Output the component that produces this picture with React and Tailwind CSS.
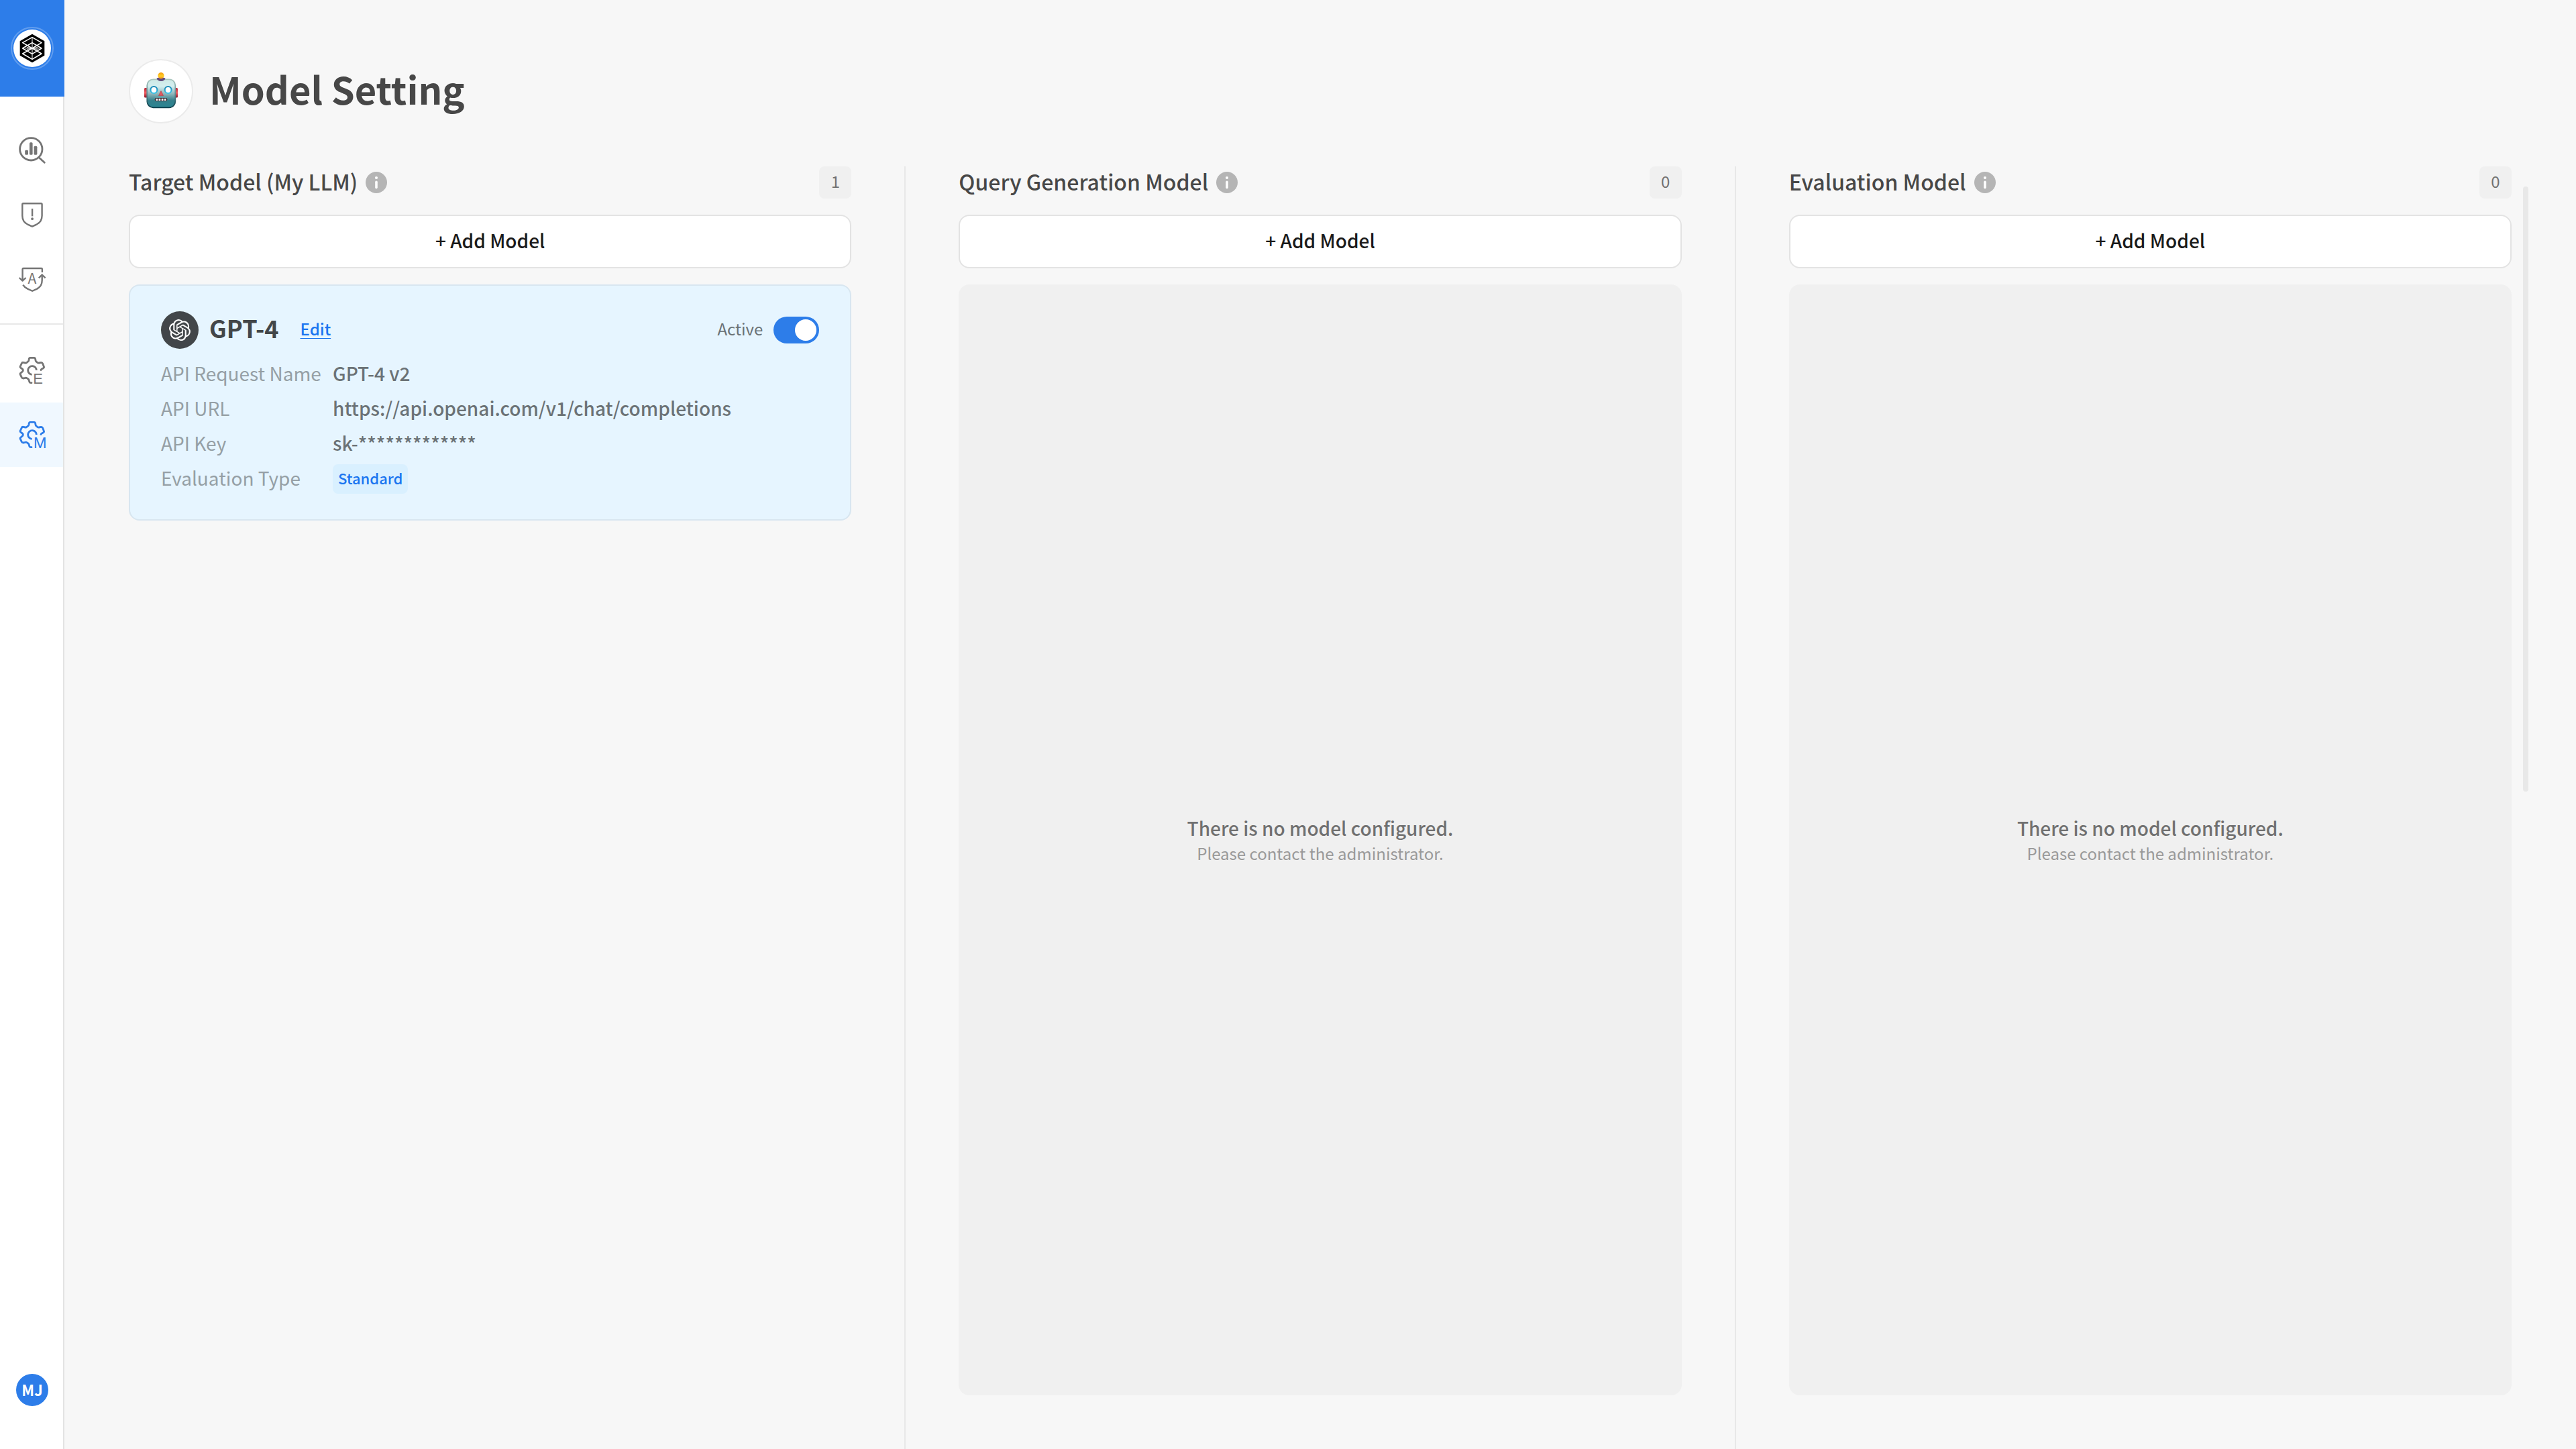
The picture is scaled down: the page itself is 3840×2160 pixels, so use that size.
import React from "react";
import { SiOpenai } from "react-icons/si";

function LogoIcon() {
  return (
    <svg viewBox="0 0 112 132" className="h-[44px] w-[38px]" aria-hidden="true">
      <path d="M56 2L111 34V98L56 130L1 98V34Z" fill="#000" />
      <g fill="none" stroke="#fff" strokeWidth="4.5" strokeLinejoin="round">
        <path d="M56 17L98 41L56 66L13 41Z" />
        <path d="M56 41L98 66L56 91L13 66Z" />
        <path d="M56 66L98 90L56 115L13 90Z" />
        <path d="M56 17V115" strokeWidth="3" />
        <path d="M24 66H88M32 61L80 71M32 71L80 61" strokeWidth="2.5" />
      </g>
    </svg>
  );
}

function AnalyzeIcon() {
  return (
    <svg viewBox="0 0 48 48" className="size-12" fill="none" stroke="currentColor" strokeWidth="2.8" aria-hidden="true">
      <circle cx="22.3" cy="22.3" r="16.7" />
      <path d="M34.3 35L42.3 42.3" strokeLinecap="round" />
      <g fill="currentColor" stroke="none">
        <rect x="13.2" y="23.7" width="4.8" height="7" rx="1.5" />
        <rect x="20" y="12.2" width="4.6" height="18.5" rx="1.5" />
        <rect x="26.6" y="17.8" width="4.8" height="12.9" rx="1.5" />
      </g>
    </svg>
  );
}

function ShieldIcon() {
  return (
    <svg viewBox="0 0 48 48" className="size-12" fill="none" stroke="currentColor" strokeWidth="2.4" strokeLinejoin="round" aria-hidden="true">
      <path d="M10.6 7.3H37.2Q38.6 7.3 38.6 8.7V25.5C38.6 32 35.5 36 31 38.3L24 41.6L16.8 38.3C12.3 36 9.3 32 9.3 25.5V8.7Q9.3 7.3 10.6 7.3Z" />
      <path d="M24.1 15V26.4" />
      <circle cx="24.1" cy="30.2" r="1.9" fill="currentColor" stroke="none" />
    </svg>
  );
}

function AutoShieldIcon() {
  return (
    <svg viewBox="0 0 48 48" className="size-12" fill="none" stroke="currentColor" strokeWidth="2.4" aria-hidden="true">
      <path d="M38.9 14V9.2Q38.9 8 37.7 8H10.8Q9.6 8 9.6 9.2V26" />
      <path d="M4.7 22L9.6 26.6L14.5 22" strokeLinejoin="round" />
      <path d="M10.3 32.6C12 35.4 14.4 37.4 17.2 38.6L24.2 41.8L31.2 38.6C36.2 36 38.7 32.5 38.7 26V18" />
      <path d="M33.8 22.3L38.7 17.6L43.6 22.3" strokeLinejoin="round" />
      <text x="24" y="31" textAnchor="middle" fontSize="21" fill="currentColor" stroke="none" className="font-['Noto_Sans_CJK_KR',sans-serif]">A</text>
    </svg>
  );
}

function GearIcon({ children }) {
  return (
    <svg viewBox="0 0 144 144" className="size-12" fill="none" stroke="currentColor" strokeWidth="8.5" strokeLinecap="round" strokeLinejoin="round" aria-hidden="true">
      <path d="M111 71Q112 67 115 66L122 62Q126 59 124 55L119 42Q117 37 112 37L103 39Q98 40 95 37L90 33Q87 31 87 27L86 21Q85 16 81 16H63Q59 16 58 20L57 27Q56 31 53 33L48 37Q45 40 41 39L32 37Q27 36 25 41L19 54Q17 58 21 61L28 66Q31 68 31 72T28 78L21 84Q17 87 19 91L25 104Q27 108 32 108L41 106Q45 105 48 107L54 111Q57 113 58 118L60 125Q61 128 66 128H69" />
      <path d="M71 91A19 19 0 1 1 91 72" strokeLinecap="butt" />
      {children}
    </svg>
  );
}

function GearEIcon() {
  return (
    <GearIcon>
      <text x="76" y="131" fontSize="66" fill="currentColor" stroke="none" className="font-['Liberation_Sans',sans-serif]">E</text>
    </GearIcon>
  );
}

function GearMIcon() {
  return (
    <GearIcon>
      <text x="78" y="131" fontSize="65" fill="currentColor" stroke="none" className="font-['Inter',sans-serif]">M</text>
    </GearIcon>
  );
}

function RobotIcon() {
  return (
    <svg viewBox="0 0 56 56" className="size-14" aria-hidden="true">
      <defs>
        <linearGradient id="head" x1="0" y1="0" x2="0" y2="1">
          <stop offset="0" stopColor="#cfe9e6" />
          <stop offset="0.25" stopColor="#d3efef" />
          <stop offset="0.5" stopColor="#93b9bd" />
          <stop offset="0.75" stopColor="#347f8b" />
          <stop offset="1" stopColor="#2a8592" />
        </linearGradient>
        <linearGradient id="rim" x1="0" y1="0" x2="0" y2="1">
          <stop offset="0" stopColor="#a9c6bf" />
          <stop offset="0.5" stopColor="#5e8f95" />
          <stop offset="1" stopColor="#0d3f4c" />
        </linearGradient>
        <linearGradient id="bulb" x1="0" y1="0" x2="0" y2="1">
          <stop offset="0" stopColor="#f59a0c" />
          <stop offset="0.55" stopColor="#ffd028" />
          <stop offset="1" stopColor="#f08a1c" />
        </linearGradient>
        <linearGradient id="ear" x1="0" y1="0" x2="0" y2="1">
          <stop offset="0" stopColor="#b82436" />
          <stop offset="0.5" stopColor="#f25f62" />
          <stop offset="1" stopColor="#8d1526" />
        </linearGradient>
        <linearGradient id="eye" x1="0" y1="0" x2="0" y2="1">
          <stop offset="0" stopColor="#1b86b4" />
          <stop offset="1" stopColor="#35c4ea" />
        </linearGradient>
      </defs>
      <rect x="3" y="23" width="5" height="14.5" rx="1.5" fill="url(#ear)" />
      <rect x="48" y="23" width="5" height="14.5" rx="1.5" fill="url(#ear)" />
      <rect x="7.3" y="10.3" width="42" height="42" rx="9" fill="url(#head)" stroke="url(#rim)" strokeWidth="1.8" />
      <path d="M21.5 8.6Q28 6.4 34.5 8.6Q33.5 13 28 13T21.5 8.6Z" fill="#5f4a7c" />
      <circle cx="28" cy="4.8" r="4.7" fill="url(#bulb)" />
      <circle cx="17.4" cy="26" r="5" fill="#fff" stroke="url(#eye)" strokeWidth="2.2" />
      <circle cx="38.6" cy="26" r="5" fill="#fff" stroke="url(#eye)" strokeWidth="2.2" />
      <path d="M28 27.5L31.6 34.6H24.4Z" fill="#e0595f" stroke="#b8474f" strokeWidth="0.8" strokeLinejoin="round" />
      <rect x="18.6" y="38" width="18.8" height="5" rx="2.4" fill="#3b2d33" />
      <path d="M20.5 39H23V42H20.5ZM24.5 39H27.3V42H24.5ZM28.7 39H31.5V42H28.7ZM33 39H35.5V42H33Z" fill="#fff" />
    </svg>
  );
}

function InfoIcon() {
  return (
    <svg viewBox="0 0 32 32" className="size-8" aria-hidden="true">
      <circle cx="16" cy="16" r="16" fill="#b5b5b5" />
      <circle cx="16" cy="9" r="2.1" fill="#fff" />
      <rect x="14.2" y="13.4" width="3.6" height="12" rx="1.8" fill="#fff" />
    </svg>
  );
}

function NavItem({ label, active, children }) {
  return (
    <li>
      <a
        href="#"
        aria-label={label}
        aria-current={active ? "page" : undefined}
        className={`flex h-24 items-center justify-center pl-0.5 ${active ? "bg-[#f0f8ff] text-[#2d7de9]" : "text-[#757575]"}`}
      >
        {children}
      </a>
    </li>
  );
}

function Sidebar() {
  return (
    <aside className="flex w-24 shrink-0 flex-col border-r-2 border-[#e3e3e3] bg-white">
      <a href="#" aria-label="Home" className="-mr-0.5 flex h-36 items-center justify-center bg-[#2d7de9]">
        <span className="flex size-16 items-center justify-center rounded-full border-2 border-white/25">
          <span className="flex size-14 items-center justify-center rounded-full bg-white">
            <LogoIcon />
          </span>
        </span>
      </a>
      <nav className="flex flex-1 flex-col">
        <ul className="border-b-2 border-[#e8e8e8] pt-8 pb-[18px]">
          <NavItem label="Analysis"><AnalyzeIcon /></NavItem>
          <NavItem label="Risk"><ShieldIcon /></NavItem>
          <NavItem label="Auto protection"><AutoShieldIcon /></NavItem>
        </ul>
        <ul className="pt-5">
          <NavItem label="Evaluation setting"><GearEIcon /></NavItem>
          <NavItem label="Model setting" active><GearMIcon /></NavItem>
        </ul>
      </nav>
      <button type="button" className="mb-16 ml-6 flex size-12 items-center justify-center rounded-full bg-[#2d7de9] pb-0.5 text-[22px] leading-8 font-bold text-white">
        MJ
      </button>
    </aside>
  );
}

function Column({ title, count, children }) {
  return (
    <section className="flex min-w-0 flex-1 flex-col gap-6 pb-20">
      <div className="flex h-12 items-center gap-3">
        <h2 className="pb-1 text-[32px] leading-10 font-medium text-[#474747]">{title}</h2>
        <button type="button" aria-label={`About ${title}`}><InfoIcon /></button>
        <span className="ml-auto flex size-12 items-center justify-center rounded-lg bg-[#f0f0f0] pb-1 text-2xl text-[#707070]">
          {count}
        </span>
      </div>
      <button type="button" className="h-20 shrink-0 rounded-2xl border-2 border-[#e3e3e3] bg-white pb-1 text-[28px] leading-10 font-medium text-[#1a1a1a]">
        + Add Model
      </button>
      {children}
    </section>
  );
}

function Divider() {
  return <div className="w-0.5 shrink-0 bg-[#e8e8e8]" />;
}

function EmptyPanel() {
  return (
    <div className="flex flex-1 flex-col items-center justify-center rounded-2xl bg-[#f0f0f0] text-center">
      <p className="text-[28px] leading-10 font-medium text-[#707070]">There is no model configured.</p>
      <p className="text-2xl leading-9 text-[#999999]">Please contact the administrator.</p>
    </div>
  );
}

function Field({ name, children }) {
  return (
    <div className="flex h-11 items-center gap-4">
      <dt className="w-60 shrink-0 pb-1 text-[28px] leading-10 whitespace-nowrap text-[#959fa5]">{name}</dt>
      <dd className="text-[28px] leading-10 font-medium text-[#6b7276]">{children}</dd>
    </div>
  );
}

function ModelCard() {
  return (
    <article className="rounded-2xl border-2 border-[#d8e6f0] bg-[#e6f5ff] px-[46px] py-[38px]">
      <header className="flex h-14 items-center">
        <span className="flex size-14 items-center justify-center rounded-full bg-[#424649]">
          <SiOpenai className="size-8 text-white" aria-hidden="true" />
        </span>
        <h3 className="ml-4 pb-2 text-4xl leading-12 font-bold text-[#424649]">GPT-4</h3>
        <a href="#" className="ml-8 pb-1 text-2xl font-medium text-[#1a75f0] underline decoration-1 underline-offset-4">Edit</a>
        <label className="ml-auto flex items-center gap-4 text-2xl text-[#6b7276]">
          <span className="pb-1">Active</span>
          <input
            type="checkbox"
            role="switch"
            defaultChecked
            className="flex h-10 w-17 appearance-none items-center rounded-full bg-[#b5b5b5] px-1 before:size-8 before:rounded-full before:bg-white checked:justify-end checked:bg-[#2d7de9]"
          />
        </label>
      </header>
      <dl className="mt-4 flex flex-col gap-2">
        <Field name="API Request Name"><span className="block pb-1">GPT-4 v2</span></Field>
        <Field name="API URL"><span className="block pb-1">https://api.openai.com/v1/chat/completions</span></Field>
        <Field name="API Key"><span className="block pb-1">sk-*************</span></Field>
        <Field name="Evaluation Type">
          <span className="flex h-11 items-center rounded-lg bg-[#d9f0ff] px-2 pb-1 text-[22px] text-[#1a75f0]">Standard</span>
        </Field>
      </dl>
    </article>
  );
}

export default function App() {
  return (
    <div className="flex min-h-screen bg-[#f7f7f7] font-['Noto_Sans_CJK_KR',sans-serif]">
      <Sidebar />
      <main className="relative flex min-w-0 flex-1 flex-col px-24 pt-22">
        <div className="flex items-center gap-6">
          <span className="flex size-24 items-center justify-center rounded-full border-2 border-[#ebebeb] bg-white">
            <RobotIcon />
          </span>
          <h1 className="pb-2 text-[56px] leading-18 font-bold text-[#474747]">Model Setting</h1>
        </div>
        <div className="mt-16 flex flex-1 gap-[79px]">
          <Column title="Target Model (My LLM)" count={1}>
            <ModelCard />
          </Column>
          <Divider />
          <Column title="Query Generation Model" count={0}>
            <EmptyPanel />
          </Column>
          <Divider />
          <Column title="Evaluation Model" count={0}>
            <EmptyPanel />
          </Column>
        </div>
        <div className="absolute top-[278px] right-[71px] h-[902px] w-2 rounded-full bg-[#e8e8e8]" aria-hidden="true" />
      </main>
    </div>
  );
}
